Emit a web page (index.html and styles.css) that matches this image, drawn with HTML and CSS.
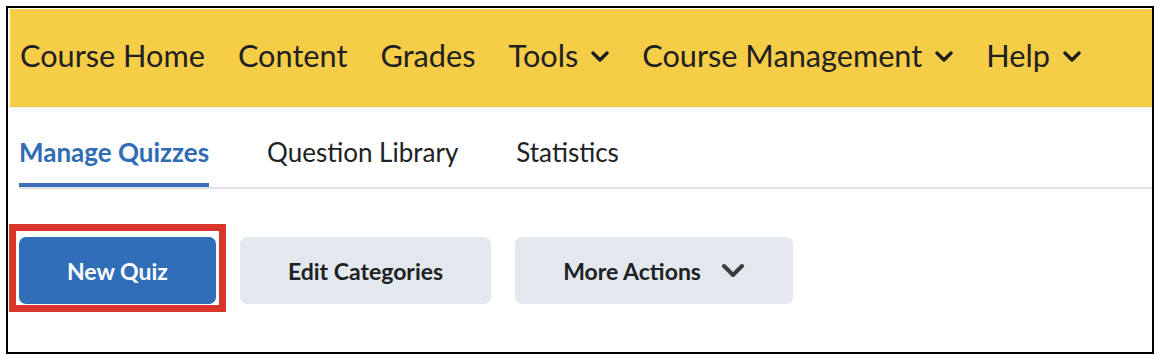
FILE: index.html
```html
<!DOCTYPE html>
<html lang="en">
<head>
    <meta charset="UTF-8">
    <title>Manage Quizzes</title>
    <link rel="stylesheet" href="styles.css">
</head>
<body>
    <div class="frame">
        <nav class="navbar">
            <a class="nav-item">Course Home</a>
            <a class="nav-item">Content</a>
            <a class="nav-item">Grades</a>
            <a class="nav-item">Tools
                <svg class="nav-chevron" viewBox="0 0 18 11"><path d="M2 2l7 7 7-7"/></svg>
            </a>
            <a class="nav-item">Course Management
                <svg class="nav-chevron" viewBox="0 0 18 11"><path d="M2 2l7 7 7-7"/></svg>
            </a>
            <a class="nav-item">Help
                <svg class="nav-chevron" viewBox="0 0 18 11"><path d="M2 2l7 7 7-7"/></svg>
            </a>
        </nav>
        <div class="strip"></div>

        <div class="tabs">
            <a class="tab active">Manage Quizzes</a>
            <a class="tab">Question Library</a>
            <a class="tab">Statistics</a>
        </div>

        <div class="actions">
            <div class="btn-wrap">
                <button class="btn primary">New Quiz</button>
                <span class="highlight"></span>
            </div>
            <button class="btn">Edit Categories</button>
            <button class="btn">More Actions
                <svg class="btn-chevron" viewBox="0 0 24 15"><path d="M3 3l9 9 9-9"/></svg>
            </button>
        </div>
    </div>
</body>
</html>
```

FILE: styles.css
```css
body {
    margin: 0;
    background: #fff;
    font-family: Lato, 'Noto Sans', sans-serif;
    color: #202122;
}

.frame {
    box-sizing: border-box;
    width: 1148px;
    height: 348px;
    margin: 6px;
    border: 2px solid #000;
    padding: 1px 0 0 2px;
    overflow: hidden;
}

.navbar {
    display: flex;
    align-items: center;
    gap: 33px;
    height: 98px;
    padding: 0 0 5px 10px;
    box-sizing: border-box;
    background-color: #f6cd46;
    border-bottom: 1px solid #eec640;
}

.nav-item {
    display: flex;
    align-items: center;
    gap: 13px;
    font-size: 30.7px;
    color: #1f2022;
    white-space: nowrap;
}

.nav-chevron {
    width: 18px;
    height: 11px;
    margin-top: 3px;
    fill: none;
    stroke: #1f2022;
    stroke-width: 3.4;
    stroke-linecap: round;
    stroke-linejoin: round;
}

.strip {
    height: 5px;
    background-color: #f9f9f9;
}

.tabs {
    display: flex;
    gap: 58px;
    margin-left: 9px;
    border-bottom: 2px solid #dfe2e8;
}

.tab {
    padding: 25px 0 16px;
    line-height: 30px;
    font-size: 26px;
    color: #202122;
    border-bottom: 4px solid transparent;
}

.tab.active {
    color: #2f6cb5;
    font-weight: bold;
    border-bottom-color: #3a70b9;
}

.actions {
    display: flex;
    gap: 24px;
    margin: 48px 0 0 9px;
}

.btn-wrap {
    position: relative;
    display: flex;
}

.btn {
    display: flex;
    align-items: center;
    gap: 20px;
    height: 67px;
    padding: 0 48px;
    border: none;
    border-radius: 7px;
    background-color: #e3e8ef;
    color: #202122;
    font-family: Lato, 'Noto Sans', sans-serif;
    font-size: 23px;
    font-weight: bold;
    cursor: pointer;
}

.btn.primary {
    background-color: #306fb8;
    color: #fff;
}

.btn-chevron {
    width: 24px;
    height: 15px;
    fill: none;
    stroke: #3b3c3e;
    stroke-width: 4;
    stroke-linecap: round;
    stroke-linejoin: round;
}

/* red annotation box round the New Quiz button */
.highlight {
    position: absolute;
    top: -13px;
    left: -10px;
    right: -10px;
    bottom: -8px;
    border: 7px solid #d7362b;
    pointer-events: none;
}
```
